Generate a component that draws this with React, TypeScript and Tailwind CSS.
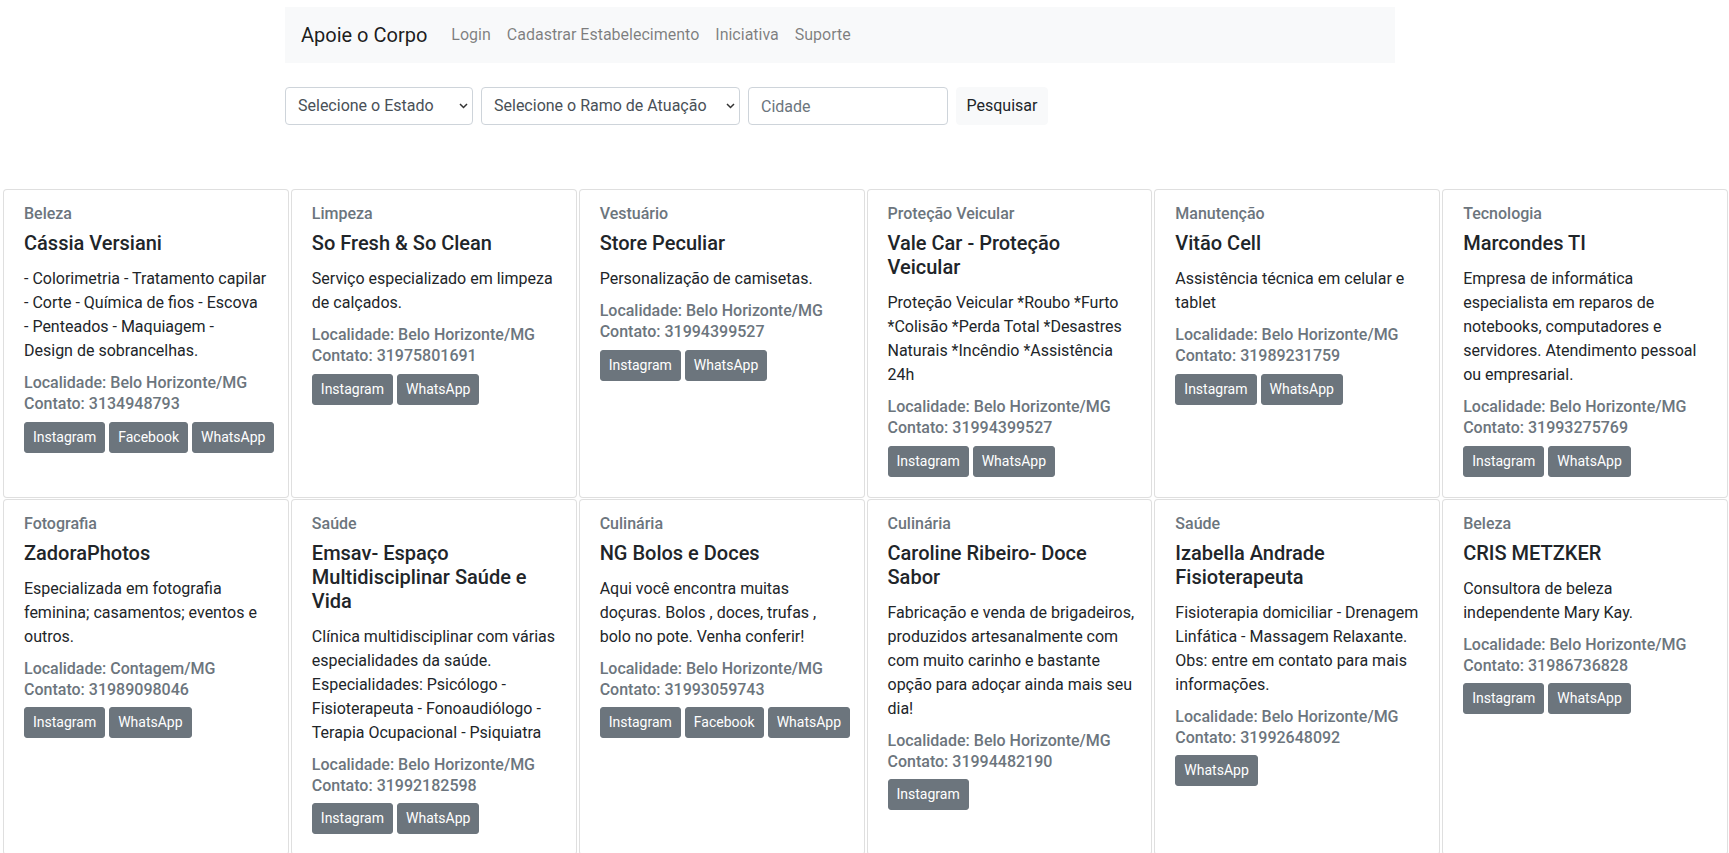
import React from "react";

type Negocio = {
  ramo: string;
  nome: string;
  descricao: string;
  cidade: string;
  contato: string;
  links: string[];
};

const negocios: Negocio[] = [
  {
    ramo: "Beleza",
    nome: "Cássia Versiani",
    descricao:
      "- Colorimetria - Tratamento capilar\n- Corte - Química de fios - Escova\n- Penteados - Maquiagem -\nDesign de sobrancelhas.",
    cidade: "Belo Horizonte/MG",
    contato: "3134948793",
    links: ["Instagram", "Facebook", "WhatsApp"],
  },
  {
    ramo: "Limpeza",
    nome: "So Fresh & So Clean",
    descricao: "Serviço especializado em limpeza\nde calçados.",
    cidade: "Belo Horizonte/MG",
    contato: "31975801691",
    links: ["Instagram", "WhatsApp"],
  },
  {
    ramo: "Vestuário",
    nome: "Store Peculiar",
    descricao: "Personalização de camisetas.",
    cidade: "Belo Horizonte/MG",
    contato: "31994399527",
    links: ["Instagram", "WhatsApp"],
  },
  {
    ramo: "Proteção Veicular",
    nome: "Vale Car - Proteção\nVeicular",
    descricao:
      "Proteção Veicular *Roubo *Furto\n*Colisão *Perda Total *Desastres\nNaturais *Incêndio *Assistência\n24h",
    cidade: "Belo Horizonte/MG",
    contato: "31994399527",
    links: ["Instagram", "WhatsApp"],
  },
  {
    ramo: "Manutenção",
    nome: "Vitão Cell",
    descricao: "Assistência técnica em celular e\ntablet",
    cidade: "Belo Horizonte/MG",
    contato: "31989231759",
    links: ["Instagram", "WhatsApp"],
  },
  {
    ramo: "Tecnologia",
    nome: "Marcondes TI",
    descricao:
      "Empresa de informática\nespecialista em reparos de\nnotebooks, computadores e\nservidores. Atendimento pessoal\nou empresarial.",
    cidade: "Belo Horizonte/MG",
    contato: "31993275769",
    links: ["Instagram", "WhatsApp"],
  },
  {
    ramo: "Fotografia",
    nome: "ZadoraPhotos",
    descricao: "Especializada em fotografia\nfeminina; casamentos; eventos e\noutros.",
    cidade: "Contagem/MG",
    contato: "31989098046",
    links: ["Instagram", "WhatsApp"],
  },
  {
    ramo: "Saúde",
    nome: "Emsav- Espaço\nMultidisciplinar Saúde e\nVida",
    descricao:
      "Clínica multidisciplinar com várias\nespecialidades da saúde.\nEspecialidades: Psicólogo -\nFisioterapeuta - Fonoaudiólogo -\nTerapia Ocupacional - Psiquiatra",
    cidade: "Belo Horizonte/MG",
    contato: "31992182598",
    links: ["Instagram", "WhatsApp"],
  },
  {
    ramo: "Culinária",
    nome: "NG Bolos e Doces",
    descricao:
      "Aqui você encontra muitas\ndoçuras. Bolos , doces, trufas ,\nbolo no pote. Venha conferir!",
    cidade: "Belo Horizonte/MG",
    contato: "31993059743",
    links: ["Instagram", "Facebook", "WhatsApp"],
  },
  {
    ramo: "Culinária",
    nome: "Caroline Ribeiro- Doce\nSabor",
    descricao:
      "Fabricação e venda de brigadeiros,\nproduzidos artesanalmente com\ncom muito carinho e bastante\nopção para adoçar ainda mais seu\ndia!",
    cidade: "Belo Horizonte/MG",
    contato: "31994482190",
    links: ["Instagram"],
  },
  {
    ramo: "Saúde",
    nome: "Izabella Andrade\nFisioterapeuta",
    descricao:
      "Fisioterapia domiciliar - Drenagem\nLinfática - Massagem Relaxante.\nObs: entre em contato para mais\ninformações.",
    cidade: "Belo Horizonte/MG",
    contato: "31992648092",
    links: ["WhatsApp"],
  },
  {
    ramo: "Beleza",
    nome: "CRIS METZKER",
    descricao: "Consultora de beleza\nindependente Mary Kay.",
    cidade: "Belo Horizonte/MG",
    contato: "31986736828",
    links: ["Instagram", "WhatsApp"],
  },
];

const Chevron = () => (
  <svg
    className="pointer-events-none absolute right-[5px] top-[16px] h-[6px] w-[9px]"
    viewBox="0 0 9 6"
    fill="none"
  >
    <path d="M1 1l3.5 3.5L8 1" stroke="#333" strokeWidth="1.5" />
  </svg>
);

const NegocioCard = ({ n }: { n: Negocio }) => (
  <div className="rounded border border-black/[.125] bg-white">
    <div className="p-5">
      <h6 className="-mt-1.5 mb-2 text-base font-medium leading-[1.2] text-[#6c757d]">
        {n.ramo}
      </h6>
      <h5 className="mb-3 whitespace-pre text-xl font-medium leading-[1.2] text-[#212529]">
        {n.nome}
      </h5>
      <p className="mb-4 whitespace-pre text-base leading-6 text-[#212529]">
        {n.descricao}
      </p>
      <h6 className="-mt-1.5 mb-2 text-base font-medium leading-[1.2] text-[#6c757d]">
        Localidade: {n.cidade}
      </h6>
      <h6 className="-mt-1.5 mb-2 text-base font-medium leading-[1.2] text-[#6c757d]">
        Contato: {n.contato}
      </h6>
      <div className="flex gap-1">
        {n.links.map((link) => (
          <a
            key={link}
            href="#"
            className="rounded-[3px] border border-[#6c757d] bg-[#6c757d] px-2 py-1 text-sm leading-[21px] text-white"
          >
            {link}
          </a>
        ))}
      </div>
    </div>
  </div>
);

export default function App() {
  return (
    <div className="h-screen overflow-hidden bg-white font-[Roboto,'Liberation_Sans',sans-serif] text-[#212529]">
      <div className="ml-[285px] w-[1110px] pt-[7px]">
        {/* Navbar */}
        <nav className="flex h-14 items-center bg-[#f8f9fa] px-4">
          <span className="mr-4 text-xl leading-[30px] text-black/90">Apoie o Corpo</span>
          {["Login", "Cadastrar Estabelecimento", "Iniciativa", "Suporte"].map((item) => (
            <a key={item} href="#" className="px-2 text-base text-black/50">
              {item}
            </a>
          ))}
        </nav>

        {/* Filtros */}
        <form className="mt-6 flex items-center gap-2">
          <div className="relative w-[188px]">
            <select className="h-[38px] w-full appearance-none rounded border border-[#ced4da] bg-white pl-3 pr-6 text-base text-[#495057]">
              <option>Selecione o Estado</option>
            </select>
            <Chevron />
          </div>
          <div className="relative w-[259px]">
            <select className="h-[38px] w-full appearance-none rounded border border-[#ced4da] bg-white pl-3 pr-6 text-base text-[#495057]">
              <option>Selecione o Ramo de Atuação</option>
            </select>
            <Chevron />
          </div>
          <input
            type="text"
            placeholder="Cidade"
            className="h-[38px] w-[200px] rounded border border-[#ced4da] px-3 text-base text-[#495057] placeholder:text-[#6c757d]"
          />
          <button
            type="button"
            className="h-[38px] w-[92px] rounded border border-[#f8f9fa] bg-[#f8f9fa] text-base text-[#212529]"
          >
            Pesquisar
          </button>
        </form>
      </div>

      {/* Cards */}
      <div className="mt-[64px] grid grid-cols-6 gap-x-[2px] gap-y-px pl-[3px] pr-px">
        {negocios.map((n, i) => (
          <NegocioCard key={i} n={n} />
        ))}
      </div>
    </div>
  );
}
